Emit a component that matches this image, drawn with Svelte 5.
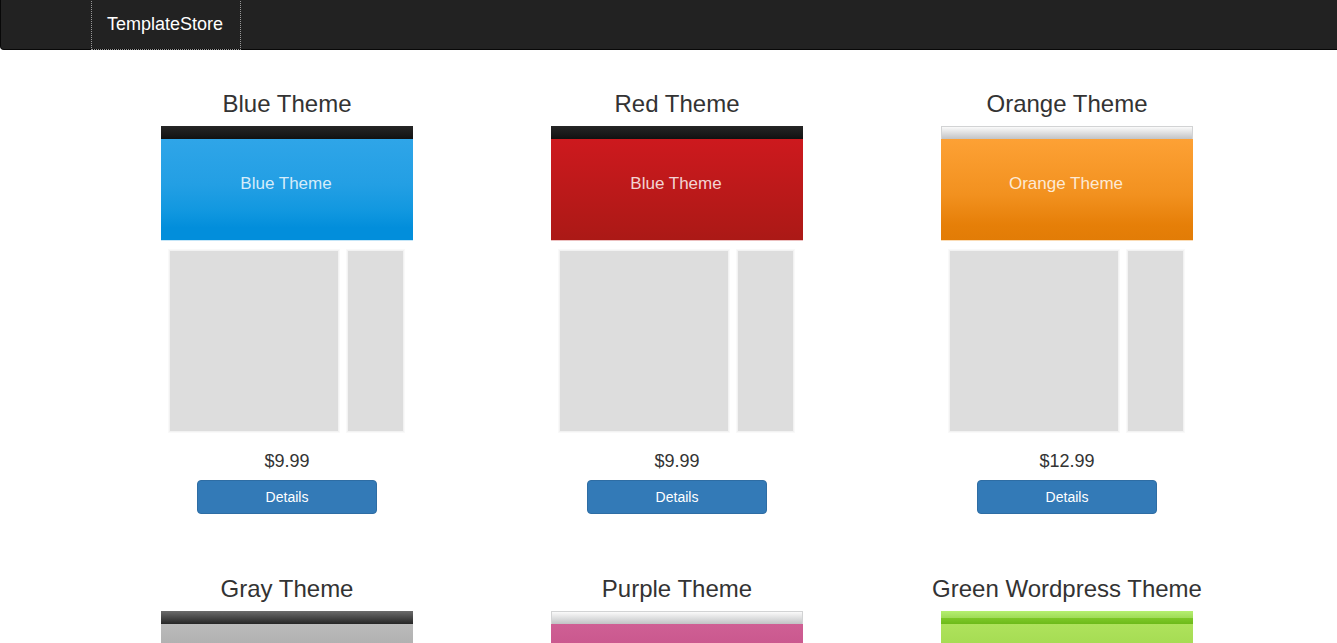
<script>
  const themes = [
    { id: 'blue', name: 'Blue Theme', banner: 'Blue Theme', price: '$9.99', bar: 'black' },
    { id: 'red', name: 'Red Theme', banner: 'Blue Theme', price: '$9.99', bar: 'black' },
    { id: 'orange', name: 'Orange Theme', banner: 'Orange Theme', price: '$12.99', bar: 'silver' },
    { id: 'gray', name: 'Gray Theme', banner: 'Gray Theme', price: '$9.99', bar: 'slate' },
    { id: 'purple', name: 'Purple Theme', banner: 'Purple Theme', price: '$9.99', bar: 'silver' },
    { id: 'green', name: 'Green Wordpress Theme', banner: 'Green Theme', price: '$12.99', bar: 'lime' }
  ];
</script>

<div class="page">
  <nav class="navbar">
    <div class="container">
      <a class="brand" href="#top">TemplateStore</a>
    </div>
  </nav>

  <main class="container grid">
    {#each themes as theme (theme.id)}
      <section class="item">
        <h3>{theme.name}</h3>
        <div class="preview">
          <div class="bar {theme.bar}"></div>
          <div class="hero {theme.id}">{theme.banner}</div>
          <div class="panels">
            <div class="panel wide"></div>
            <div class="panel"></div>
          </div>
        </div>
        <h4>{theme.price}</h4>
        <a class="btn" href="#{theme.id}">Details</a>
      </section>
    {/each}
  </main>
</div>

<style>
  :global(body) {
    margin: 0;
    overflow-x: hidden;
    background: #fff;
    color: #333;
    font: 14px/20px "Liberation Sans", Arial, sans-serif;
  }
  :global(*) {
    box-sizing: border-box;
  }
  .page {
    margin-right: -17px;
  }
  .container {
    max-width: 1170px;
    margin: 0 auto;
  }
  .navbar {
    height: 50px;
    background: #222;
    border: 1px solid #080808;
    border-top: 0;
    border-radius: 0 0 4px 4px;
    margin-bottom: 41px;
  }
  .navbar .container {
    display: flex;
  }
  .brand {
    padding: 14px 17px 15px 15px;
    color: #fff;
    font-size: 18px;
    line-height: 20px;
    text-decoration: none;
    outline: 1px dotted #999;
  }
  .grid {
    display: grid;
    grid-template-columns: repeat(3, 1fr);
    row-gap: 62px;
    padding-bottom: 60px;
  }
  .item {
    display: flex;
    flex-direction: column;
    align-items: center;
  }
  h3,
  h4 {
    margin: 0 0 9px;
    font-weight: 400;
  }
  h3 {
    font-size: 24px;
    line-height: 26px;
  }
  h4 {
    font-size: 18px;
    line-height: 20px;
  }
  .preview {
    width: 252px;
    padding-bottom: 18px;
  }
  .bar {
    height: 13px;
  }
  .bar.black {
    background: linear-gradient(#262626, #111);
  }
  .bar.silver {
    background: linear-gradient(#fafafa, #c2c3c5);
    border: 1px solid #d2d3d4;
    border-bottom: 0;
  }
  .bar.slate {
    background: linear-gradient(#6c6c6c, #252525);
  }
  .bar.lime {
    background: linear-gradient(#b5f070, #a0dc58 52%, #7cc827 56%, #6dba1a);
  }
  .hero {
    height: 102px;
    padding-top: 35px;
    padding-right: 2px;
    border-bottom: 1px solid;
    color: rgba(255, 255, 255, 0.82);
    font-size: 17px;
    line-height: 20px;
    text-align: center;
  }
  .blue {
    background: linear-gradient(#2fa5e8, #239fe4 45%, #1298e0 70%, #028edb 88%);
    border-color: #c5e6f8;
  }
  .red {
    background: linear-gradient(#cd191e, #ab1916);
    border-color: #ecc0c0;
  }
  .orange {
    background: linear-gradient(#fda135, #f2911f 55%, #e67f08 85%, #e27c06);
    border-color: #fbdcb5;
  }
  .gray {
    background: linear-gradient(#bbb, #888);
    border-color: #ddd;
  }
  .purple {
    background: linear-gradient(#cf5f94, #b53c77);
    border-color: #eccadb;
  }
  .green {
    background: linear-gradient(#aee25c, #84c52d);
    border-color: #dcf2bb;
  }
  .panels {
    display: flex;
    gap: 6px;
    padding: 8px 8px 0 7px;
  }
  .panel {
    flex: 1;
    height: 184px;
    background: #ddd;
    border: 1px solid #f9f9f9;
    box-shadow: inset 0 0 0 1px #f2f2f2;
  }
  .panel.wide {
    flex: none;
    width: 172px;
  }
  .btn {
    width: 180px;
    padding: 6px 12px;
    border: 1px solid #2e6da4;
    border-radius: 4px;
    background: #337ab7;
    color: #fff;
    text-align: center;
    text-decoration: none;
  }
</style>
